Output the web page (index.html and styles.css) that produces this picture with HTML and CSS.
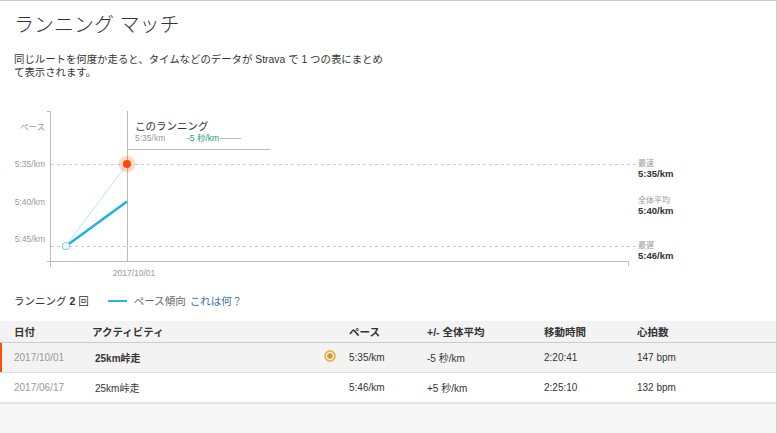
FILE: index.html
```html
<!DOCTYPE html>
<html lang="ja">
<head>
  <meta charset="UTF-8" />
  <title>ランニング マッチ</title>
  <link rel="stylesheet" href="styles.css">
</head>
<body>
  <div id="page">
    <div id="intro">
      <h1>ランニング マッチ</h1>
      <p>同じルートを何度か走ると、タイムなどのデータが Strava で 1 つの表にまとめて表示されます。</p>
    </div>

    <!-- pace chart, drawn in page coordinates -->
    <svg id="chart" width="777" height="180" viewBox="0 100 777 180">
      <g class="axis">
        <path d="M50.5 111 V267" />
        <path d="M47 111.5 H51" />
        <path d="M47 261.5 H628.5 V266" />
        <path d="M127.5 111 V261" />
        <path d="M127 149.5 H270" />
        <path d="M220 138.5 H241" />
      </g>
      <g class="grid">
        <path d="M51 164.5 H636" />
        <path d="M51 246.5 H636" />
      </g>

      <text class="tick" x="20" y="130">ペース</text>
      <text class="tick" x="45" y="167" text-anchor="end">5:35/km</text>
      <text class="tick" x="45" y="205" text-anchor="end">5:40/km</text>
      <text class="tick" x="45" y="242" text-anchor="end">5:45/km</text>
      <text class="tick" x="134" y="276" text-anchor="middle">2017/10/01</text>

      <text class="focus-title" x="135" y="130">このランニング</text>
      <text class="tick" x="135" y="141">5:35/km</text>
      <text class="delta" x="187" y="141">-5 秒/km</text>

      <text class="ref-label" x="638" y="166">最速</text>
      <text class="ref-value" x="638" y="177">5:35/km</text>
      <text class="ref-label" x="638" y="203">全体平均</text>
      <text class="ref-value" x="638" y="214">5:40/km</text>
      <text class="ref-label" x="638" y="248">最遅</text>
      <text class="ref-value" x="638" y="259">5:46/km</text>

      <path class="run-line" d="M66 246 L127 164" />
      <path class="trend-line" d="M66 246 L127 201.5" />
      <circle class="halo" cx="127" cy="164" r="8.5" />
      <circle class="current" cx="127" cy="164" r="4" />
      <circle class="past" cx="66" cy="246" r="3.5" />
    </svg>

    <div id="legend">
      <span class="count">ランニング <b>2</b> 回</span>
      <span class="trend-key"></span>
      <span class="trend-name">ペース傾向</span>
      <a href="#" class="help">これは何？</a>
    </div>

    <table id="runs">
      <thead>
        <tr>
          <th class="c-date">日付</th>
          <th class="c-act">アクティビティ</th>
          <th class="c-pace">ペース</th>
          <th class="c-diff">+/- 全体平均</th>
          <th class="c-time">移動時間</th>
          <th>心拍数</th>
        </tr>
      </thead>
      <tbody>
        <tr class="current-run">
          <td class="date">2017/10/01</td>
          <td class="name">25km峠走
            <svg class="marker" width="12" height="12" viewBox="0 0 12 12">
              <circle cx="6" cy="6" r="5" fill="none" stroke="#f6a623" stroke-width="1.5" />
              <circle cx="6" cy="6" r="2.8" fill="#d6963b" />
            </svg>
          </td>
          <td>5:35/km</td>
          <td>-5 秒/km</td>
          <td>2:20:41</td>
          <td>147 bpm</td>
        </tr>
        <tr>
          <td class="date">2017/06/17</td>
          <td class="name">25km峠走</td>
          <td>5:46/km</td>
          <td>+5 秒/km</td>
          <td>2:25:10</td>
          <td>132 bpm</td>
        </tr>
      </tbody>
    </table>
    <div id="filler"></div>
  </div>
</body>
</html>
```

FILE: styles.css
```css
body {
  margin: 0;
  font-family: "Liberation Sans", "Noto Sans CJK JP", sans-serif;
  color: #333;
  background-color: #fff;
}

#page {
  width: 776px;
  height: 432px;
  border-top: 1px solid #ccc;
  border-right: 1px solid #ccc;
  display: flex;
  flex-direction: column;
}

#intro {
  height: 99px;
  box-sizing: border-box;
  padding: 12px 14px 0;
}

#intro h1 {
  margin: 0;
  font-size: 20px;
  line-height: 24px;
  font-weight: 300;
  color: #333;
}

#intro p {
  margin: 16px 0 0;
  max-width: 374px;
  font-size: 10.4px;
  line-height: 13px;
}

#chart {
  display: block;
  flex: none;
}

#chart text {
  font-family: "Liberation Sans", "Noto Sans CJK JP", sans-serif;
}

.axis path {
  fill: none;
  stroke: #bbb;
  stroke-width: 1;
}

.grid path {
  fill: none;
  stroke: #ccc;
  stroke-width: 1;
  stroke-dasharray: 3 3;
}

.tick {
  font-size: 8.5px;
  fill: #999;
}

.focus-title {
  font-size: 10.5px;
  fill: #333;
}

.delta {
  font-size: 8.5px;
  fill: #18a078;
}

.ref-label {
  font-size: 8px;
  fill: #999;
}

.ref-value {
  font-size: 9.5px;
  font-weight: bold;
  fill: #333;
}

.run-line {
  fill: none;
  stroke: #c8e9f8;
  stroke-width: 1.2;
}

.trend-line {
  fill: none;
  stroke: #1fb0e6;
  stroke-width: 2.5;
}

.halo {
  fill: #fc4c02;
  opacity: 0.2;
}

.current {
  fill: #fc4c02;
}

.past {
  fill: #fff;
  stroke: #86d0ef;
  stroke-width: 1.2;
}

#legend {
  height: 41px;
  flex: none;
  display: flex;
  align-items: center;
  padding: 0 14px;
  font-size: 10.5px;
}

.trend-key {
  width: 19px;
  height: 2px;
  margin: 0 7px 0 19px;
  background-color: #27b2ea;
}

.trend-name {
  color: #666;
}

.help {
  margin-left: 4px;
  color: #3b6f9f;
  text-decoration: none;
}

#runs {
  width: 100%;
  border-collapse: collapse;
  flex: none;
}

#runs th {
  height: 21px;
  padding: 0 0 0 14px;
  background-color: #f3f3f3;
  border-bottom: 1px solid #ccc;
  text-align: left;
  font-size: 10.5px;
  font-weight: bold;
  color: #333;
}

#runs th + th {
  padding-left: 0;
}

#runs td {
  height: 29px;
  padding: 0;
  font-size: 10px;
  color: #333;
  border-bottom: 1px solid #ddd;
}

#runs td.date {
  padding-left: 14px;
  color: #999;
}

#runs td.name {
  padding-left: 3px;
}

#runs tbody tr:last-child td {
  border-bottom: 2px solid #e4e4e4;
}

.c-date { width: 78px; }
.c-act { width: 257px; }
.c-pace { width: 78px; }
.c-diff { width: 117px; }
.c-time { width: 93px; }

.current-run td {
  background-color: #f3f3f3;
}

.current-run td.date {
  box-shadow: inset 2px 0 #fc5200;
}

.current-run td.name {
  font-weight: bold;
  color: #222;
}

.marker {
  float: right;
  margin-right: 13px;
}

#filler {
  flex: 1;
  background-color: #f7f7f7;
}
```
